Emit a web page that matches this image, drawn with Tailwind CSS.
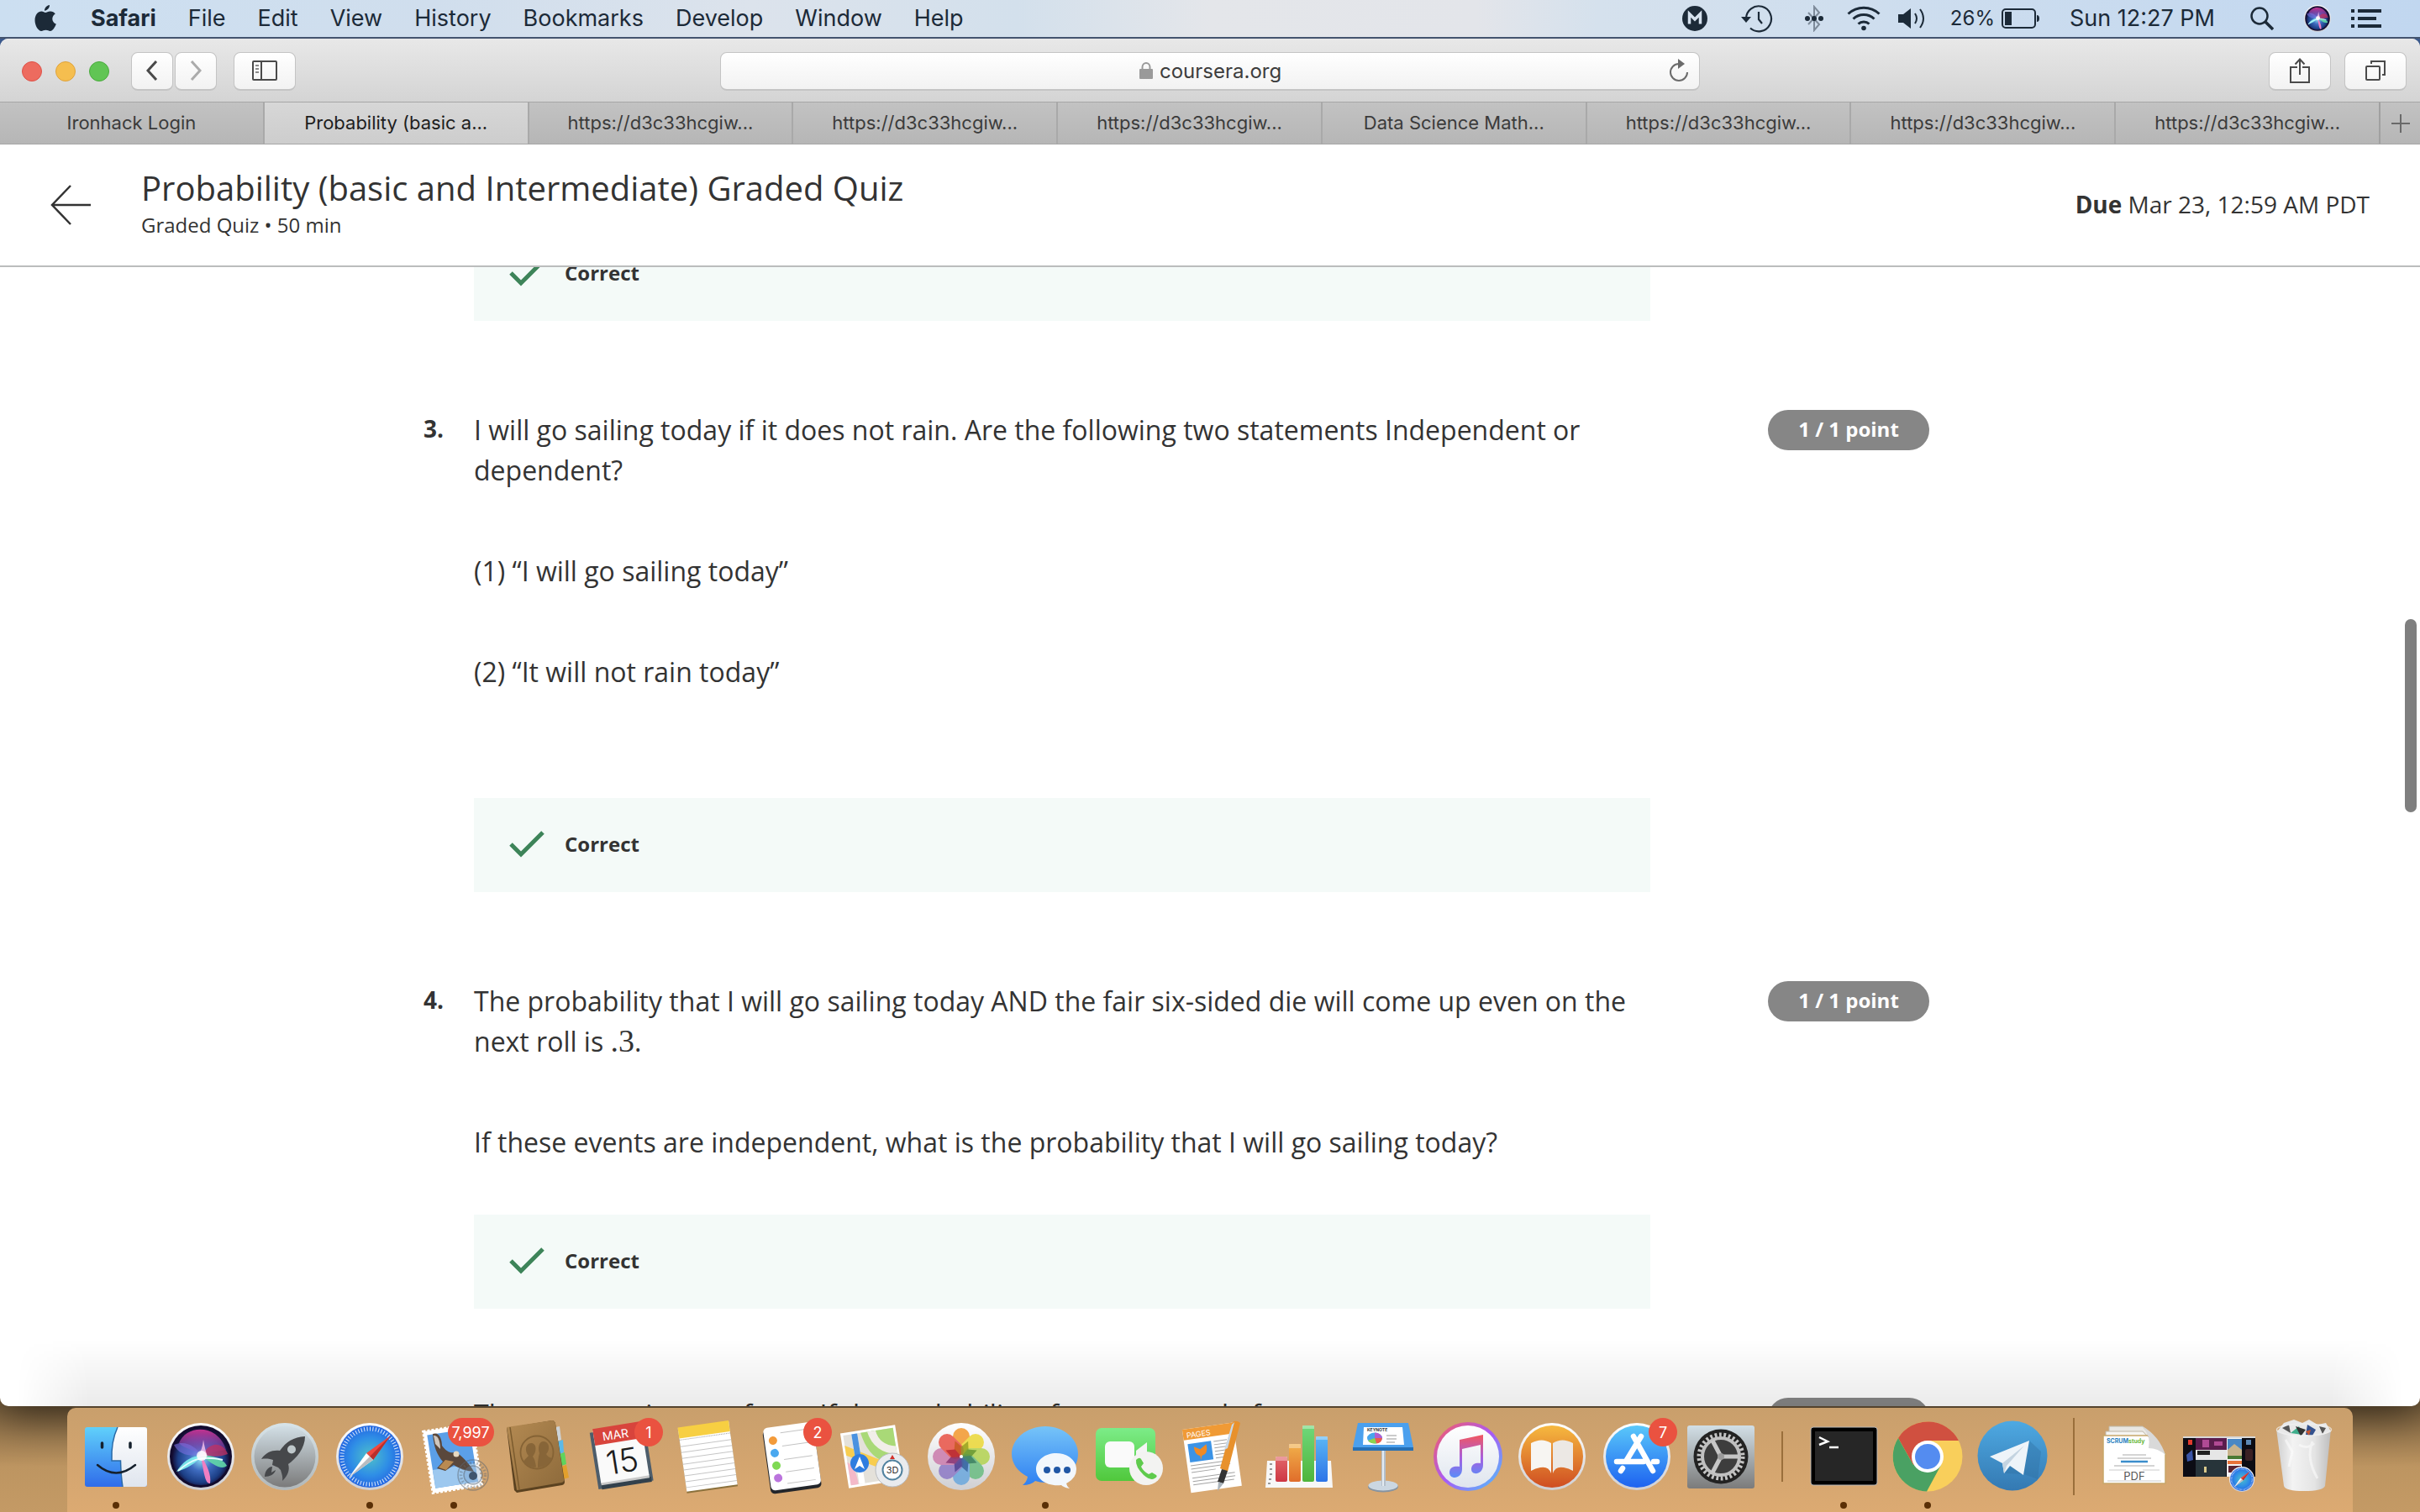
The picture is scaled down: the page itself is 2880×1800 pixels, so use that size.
<!DOCTYPE html>
<html lang="en">
<head>
<meta charset="utf-8">
<title>Probability (basic and Intermediate) Graded Quiz</title>
<script src="https://cdn.jsdelivr.net/npm/@tailwindcss/browser@4"></script>
</head>
<body class="flex h-screen flex-col overflow-hidden bg-[linear-gradient(to_bottom,#44669f_5%,#a98355_50%,#7d6340_93%,#bd9561_97%,#c49a65)] font-['Inter','Liberation_Sans',sans-serif]">

<!-- Shared gradients and symbols -->
<svg class="absolute size-0" aria-hidden="true">
  <defs>
    <linearGradient id="blue" x2="0" y2="1"><stop stop-color="#5ac8fa"/><stop offset="1" stop-color="#1d62f0"/></linearGradient>
    <linearGradient id="finder" x2="0" y2="1"><stop stop-color="#60d0fb"/><stop offset="1" stop-color="#2f6cea"/></linearGradient>
    <linearGradient id="white" x2="0" y2="1"><stop stop-color="#fff"/><stop offset="1" stop-color="#dfe5ee"/></linearGradient>
    <linearGradient id="rim" x2="0" y2="1"><stop stop-color="#fff"/><stop offset="1" stop-color="#cfcfd3"/></linearGradient>
    <linearGradient id="silver" x2="0" y2="1"><stop stop-color="#d2dfe6"/><stop offset="1" stop-color="#7b7b7b"/></linearGradient>
    <linearGradient id="orange" x2="0" y2="1"><stop stop-color="#f6b93f"/><stop offset="1" stop-color="#cf4d22"/></linearGradient>
    <linearGradient id="green" x2="0" y2="1"><stop stop-color="#7cec88"/><stop offset="1" stop-color="#50c83c"/></linearGradient>
    <linearGradient id="msg" x2="0" y2="1"><stop stop-color="#76c4f8"/><stop offset="1" stop-color="#2f80f2"/></linearGradient>
    <linearGradient id="tg" x2="0" y2="1"><stop stop-color="#4ea9e2"/><stop offset="1" stop-color="#3479b2"/></linearGradient>
    <linearGradient id="tunes" x2="1" y2="1"><stop stop-color="#fb5c5c"/><stop offset=".5" stop-color="#a95af5"/><stop offset="1" stop-color="#4ac7fb"/></linearGradient>
    <linearGradient id="note" x2="0" y2="1"><stop stop-color="#f2565e"/><stop offset=".55" stop-color="#a65fe0"/><stop offset="1" stop-color="#5a8df8"/></linearGradient>
    <linearGradient id="leather" x2="1" y2="1"><stop stop-color="#b48a52"/><stop offset="1" stop-color="#8d6a3b"/></linearGradient>
    <linearGradient id="bin" x2="1"><stop stop-color="#cfcfcf"/><stop offset=".3" stop-color="#f3f3f3"/><stop offset=".7" stop-color="#e4e4e4"/><stop offset="1" stop-color="#bdbdbd"/></linearGradient>
    <linearGradient id="bred" x2="0" y2="1"><stop stop-color="#e2666a"/><stop offset="1" stop-color="#cd3743"/></linearGradient>
    <linearGradient id="borange" x2="0" y2="1"><stop stop-color="#f1b04a"/><stop offset="1" stop-color="#e06d2b"/></linearGradient>
    <linearGradient id="bgreen" x2="0" y2="1"><stop stop-color="#6fd87b"/><stop offset="1" stop-color="#4fb53b"/></linearGradient>
    <linearGradient id="bblue" x2="0" y2="1"><stop stop-color="#5bb7f5"/><stop offset="1" stop-color="#2c74e8"/></linearGradient>
    <radialGradient id="sea"><stop stop-color="#4fc0c8"/><stop offset=".6" stop-color="#2f8fe6"/><stop offset="1" stop-color="#2467e2"/></radialGradient>
    <radialGradient id="siriBg" cy=".55"><stop stop-color="#8fe0f4"/><stop offset=".4" stop-color="#3f6cc0"/><stop offset=".8" stop-color="#1c3f86"/><stop offset="1" stop-color="#140f38"/></radialGradient>
    <linearGradient id="siriTop" x2="0" y2="1"><stop stop-color="#c23391"/><stop offset="1" stop-color="#7c4fc0" stop-opacity=".35"/></linearGradient>
    <symbol id="siri" viewBox="0 0 80 80">
      <circle cx="40" cy="40" r="40" fill="url(#rim)"/>
      <circle cx="40" cy="40" r="37" fill="#120b2e"/>
      <circle cx="40" cy="40" r="34" fill="url(#siriBg)"/>
      <path d="M14 24C22 2 60 0 70 32C60 34 50 34 42 38C34 32 22 32 14 24Z" fill="url(#siriTop)"/>
      <path d="M42 38C50 22 66 22 72 37C62 41 50 40 42 38Z" fill="#c42f5f" opacity=".75"/>
      <path d="M8 26C22 20 34 28 40 38C26 40 14 38 8 26Z" fill="#7a6fe0" opacity=".6"/>
      <path d="M40 40C30 38 18 46 11 58C24 54 34 48 40 40Z" fill="#7ff0ee" opacity=".9"/>
      <path d="M40 38C54 38 68 44 71 51C64 57 52 48 40 38Z" fill="#63d8a8" opacity=".9"/>
      <path d="M40 38C47 50 53 62 51 72C45 73 43 56 40 38Z" fill="#f07fc2"/>
      <path d="M36 40Q42 32 43 20Q45 32 48 40Z" fill="#fbc6ee" opacity=".8"/>
      <path d="M13 57C28 44 40 38 66 44" fill="none" stroke="#e2ffff" stroke-width="2"/>
      <circle cx="41" cy="39" r="6" fill="#fff" opacity=".85"/>
    </symbol>
    <symbol id="compass" viewBox="0 0 80 80">
      <circle cx="40" cy="40" r="40" fill="url(#rim)"/>
      <circle cx="40" cy="40" r="37" fill="url(#sea)"/>
      <circle cx="40" cy="40" r="33" fill="none" stroke="#fff" stroke-opacity=".85" stroke-width="5" stroke-dasharray="1 2.45"/>
      <path d="M65 15L36 36L44 44Z" fill="#f0483e"/><path d="M65 15L40 40L44 44Z" fill="#b92f2b"/>
      <path d="M15 65L36 36L44 44Z" fill="#fff"/><path d="M15 65L40 40L44 44Z" fill="#b9bcc0"/>
    </symbol>
    <symbol id="check" viewBox="0 0 42 32"><path d="M2 16L14 28L40 2" fill="none" stroke="#3d8459" stroke-width="5"/></symbol>
  </defs>
</svg>

<!-- System menu bar -->
<header class="relative z-10 flex h-[46px] shrink-0 items-center border-b-2 border-[#44546f] bg-[linear-gradient(to_right,#ccdff1,#d0deed_18%,#dce3ec_31%,#d3e0ec_42%,#e4e6ea_50%,#e3e5ea_61%,#d5e1ed_66%,#c1d7f0)] pr-[46px] pl-[40px] text-[27px] leading-[32px] text-[#1c2a38]">
  <nav class="flex items-center gap-[38px]">
    <a href="#" aria-label="Apple menu" class="mr-[2px]"><svg class="h-[32px] w-[28px]" viewBox="0 0 28 32" fill="#1c2a38"><path d="M19 0c.3 3-2.800 6.800-6 6.700C12.700 3.800 15.800.3 19 0zM14 9c1.500 0 3.200-1.700 6-1.600 2.400.1 4.500 1.100 5.800 3-5.200 3.200-4.300 10 1 12.200C25.500 26.500 22.700 31 19.800 31c-2 0-2.800-1.200-5.300-1.200S11 31 9.200 31C5.500 31 1.500 24.500 1.500 18.300 1.500 11.500 5.500 7.600 9.300 7.600 11.500 7.600 13 9 14 9z"/></svg></a>
    <a href="#" class="font-bold">Safari</a>
    <a href="#">File</a>
    <a href="#">Edit</a>
    <a href="#">View</a>
    <a href="#">History</a>
    <a href="#">Bookmarks</a>
    <a href="#">Develop</a>
    <a href="#">Window</a>
    <a href="#">Help</a>
  </nav>
  <div class="ml-auto flex items-center">
    <svg class="mr-[40px] size-[30px]" viewBox="0 0 30 30"><circle cx="15" cy="15" r="15" fill="#1c2a38"/><path d="M8.500 21.500V9.500L15 16L21.500 9.500V21.500" fill="none" stroke="#d6e2ef" stroke-width="3.500"/></svg>
    <svg class="mr-[38px] h-[34px] w-[38px]" viewBox="0 0 38 34" fill="none" stroke="#1c2a38" stroke-width="2.200"><path d="M6 17A15 15 0 1 1 11 28.500"/><path d="M21 9V18L25 23"/><path d="M0 15H12L6 22Z" fill="#1c2a38" stroke="none"/></svg>
    <svg class="mr-[28px] h-[32px] w-[22px]" viewBox="0 0 22 32" fill="none"><path d="M4 9L17 23L11 30V2L17 9L4 23" stroke="#7e8b9a" stroke-width="2"/><g fill="#1c2a38"><circle cx="3" cy="16" r="3"/><circle cx="11" cy="16" r="3"/><circle cx="19" cy="16" r="3"/></g></svg>
    <svg class="mr-[21px] h-[30px] w-[40px]" viewBox="0 0 40 30" fill="none" stroke="#1c2a38" stroke-width="3"><path d="M1.500 9.500A27 27 0 0 1 38.500 9.500"/><path d="M7.500 15.500A18 18 0 0 1 32.500 15.500"/><path d="M13.500 21.500A9.500 9.500 0 0 1 26.500 21.500"/><circle cx="20" cy="26.500" r="2.800" fill="#1c2a38" stroke="none"/></svg>
    <svg class="mr-[28px] h-[26px] w-[34px]" viewBox="0 0 34 26" fill="none" stroke="#1c2a38" stroke-width="2"><path d="M0 8H6L15 1V25L6 18H0Z" fill="#1c2a38" stroke="none"/><path d="M20 7Q24 13 20 19"/><path d="M26 2Q34 13 26 24"/></svg>
    <span class="mr-[8px] text-[24px]">26%</span>
    <svg class="mr-[35px] h-[24px] w-[46px]" viewBox="0 0 46 24"><rect x="1" y="1" width="39" height="22" rx="4" fill="none" stroke="#1c2a38" stroke-width="2"/><rect x="4" y="4" width="8" height="16" fill="#1c2a38"/><path d="M42 8Q45 8 45 12T42 16Z" fill="#1c2a38"/></svg>
    <span class="mr-[42px]">Sun 12:27 PM</span>
    <svg class="mr-[36px] size-[28px]" viewBox="0 0 28 28" fill="none" stroke="#1c2a38"><circle cx="11" cy="11" r="9.500" stroke-width="2.500"/><path d="M18 18L27 27" stroke-width="3.500"/></svg>
    <svg class="mr-[24px] size-[32px]"><use href="#siri"/></svg>
    <svg class="h-[22px] w-[36px]" viewBox="0 0 36 22" fill="#1c2a38"><path d="M0 0h4v4H0zM8 0h28v4H8zM0 9h4v4H0zM8 9h22v4H8zM0 18h4v4H0zM8 18h28v4H8z"/></svg>
  </div>
</header>

<!-- Browser window -->
<div class="relative flex min-h-0 flex-1 flex-col overflow-hidden rounded-[10px] bg-white shadow-[0_10px_50px_rgba(0,0,0,0.6)]">

  <!-- Toolbar -->
  <div class="flex h-[75px] shrink-0 items-center bg-linear-to-b from-[#e8e8e8] to-[#d4d4d4] px-[16px] pt-[2px]">
    <div class="flex w-[841px] items-center pl-[10px]">
      <div class="flex gap-4">
        <button aria-label="Close" class="size-6 rounded-full border border-[#df5148] bg-[#ed6b5f]"></button>
        <button aria-label="Minimise" class="size-6 rounded-full border border-[#dfa33c] bg-[#f5be4f]"></button>
        <button aria-label="Zoom" class="size-6 rounded-full border border-[#4aab3d] bg-[#61c554]"></button>
      </div>
      <div class="ml-[26px] flex gap-[2px]">
        <button aria-label="Back" class="flex h-[46px] w-[50px] items-center justify-center rounded-lg border border-b-2 border-[#c4c4c4] bg-linear-to-b from-white to-[#f2f2f2]"><svg class="h-[24px] w-[14px]" viewBox="0 0 14 24" fill="none" stroke="#4a4a4a" stroke-width="3"><path d="M12 1L2 12L12 23"/></svg></button>
        <button aria-label="Forward" class="flex h-[46px] w-[50px] items-center justify-center rounded-lg border border-b-2 border-[#c4c4c4] bg-linear-to-b from-white to-[#f2f2f2]"><svg class="h-[24px] w-[14px]" viewBox="0 0 14 24" fill="none" stroke="#ababab" stroke-width="3"><path d="M2 1L12 12L2 23"/></svg></button>
      </div>
      <button aria-label="Show sidebar" class="ml-[20px] flex h-[46px] w-[74px] items-center justify-center rounded-lg border border-b-2 border-[#c4c4c4] bg-linear-to-b from-white to-[#f2f2f2]"><svg class="h-[24px] w-[30px]" viewBox="0 0 30 24" fill="none" stroke="#4a4a4a" stroke-width="2"><rect x="1" y="1" width="28" height="22" rx="1"/><path d="M11 1V23"/><path d="M4 6h4M4 10h4M4 14h4" stroke="#8a8a8a"/></svg></button>
    </div>
    <div class="flex h-[46px] flex-1 items-center justify-center rounded-lg border border-b-2 border-[#c4c4c4] bg-linear-to-b from-white to-[#f2f2f2] pr-[12px] pl-[42px]">
      <div class="mx-auto flex items-center gap-[8px] pt-[2px]">
        <svg class="mb-[2px] h-[20px] w-[16px]" viewBox="0 0 16 20"><path d="M3.500 9V6A4.500 5 0 0 1 12.500 6V9" fill="none" stroke="#9a9a9a" stroke-width="2"/><rect y="8" width="16" height="12" rx="1" fill="#9a9a9a"/></svg>
        <input aria-label="Address" value="coursera.org" class="w-[150px] bg-transparent text-[24px] leading-[32px] text-[#3d3d3d] outline-none">
      </div>
      <button aria-label="Reload"><svg class="h-[28px] w-[24px]" viewBox="0 0 24 28" fill="none" stroke="#6b6b6b" stroke-width="2"><path d="M12 6A10 10 0 1 0 22 16"/><path d="M11 0V12L19 6Z" fill="#6b6b6b" stroke="none"/></svg></button>
    </div>
    <div class="flex w-[841px] justify-end gap-4">
      <button aria-label="Share" class="flex h-[46px] w-[74px] items-center justify-center rounded-lg border border-b-2 border-[#c4c4c4] bg-linear-to-b from-white to-[#f2f2f2]"><svg class="h-[30px] w-[24px]" viewBox="0 0 24 30" fill="none" stroke="#4a4a4a" stroke-width="2"><path d="M9 11H1V29H23V11H15"/><path d="M12 20V1M6.500 7.500L12 1.500L17.500 7.500"/></svg></button>
      <button aria-label="Show tabs" class="flex h-[46px] w-[74px] items-center justify-center rounded-lg border border-b-2 border-[#c4c4c4] bg-linear-to-b from-white to-[#f2f2f2]"><svg class="h-[24px] w-[24px]" viewBox="0 0 24 24" fill="none" stroke="#4a4a4a" stroke-width="2"><rect x="1" y="7" width="16" height="16" rx="1"/><path d="M7 4V1H23V17H20"/></svg></button>
    </div>
  </div>

  <!-- Tabs -->
  <nav class="flex h-[51px] shrink-0 border-y border-y-[#a6a6a6] bg-linear-to-b from-[#c2c2c2] to-[#b6b6b6] text-[22px] leading-[48px] text-[#3b3b3b]">
    <a href="#" class="flex-1 text-center">Ironhack Login</a>
    <a href="#" class="flex-1 border-l-2 border-[#a9a9a9] bg-linear-to-b from-[#d7d7d7] to-[#cdcdcd] text-center text-[#1e1e1e]">Probability (basic a...</a>
    <a href="#" class="flex-1 border-l-2 border-[#a9a9a9] text-center">https://d3c33hcgiw...</a>
    <a href="#" class="flex-1 border-l-2 border-[#a9a9a9] text-center">https://d3c33hcgiw...</a>
    <a href="#" class="flex-1 border-l-2 border-[#a9a9a9] text-center">https://d3c33hcgiw...</a>
    <a href="#" class="flex-1 border-l-2 border-[#a9a9a9] text-center">Data Science Math...</a>
    <a href="#" class="flex-1 border-l-2 border-[#a9a9a9] text-center">https://d3c33hcgiw...</a>
    <a href="#" class="flex-1 border-l-2 border-[#a9a9a9] text-center">https://d3c33hcgiw...</a>
    <a href="#" class="flex-1 border-l-2 border-[#a9a9a9] text-center">https://d3c33hcgiw...</a>
    <button aria-label="New tab" class="flex w-[49px] items-center justify-center border-l-2 border-[#a0a0a0]"><svg class="size-[22px]" viewBox="0 0 22 22" stroke="#6a6a6a" stroke-width="2"><path d="M11 0V22M0 11H22"/></svg></button>
  </nav>

  <!-- Page -->
  <div class="flex min-h-0 flex-1 flex-col font-['Open_Sans',sans-serif] text-[#333]">
    <header class="flex h-[146px] shrink-0 items-center border-b-2 border-[#bbbdbd] px-[60px]">
      <a href="#" aria-label="Back" class="w-[108px]"><svg class="h-[48px] w-[48px]" viewBox="0 0 48 48" fill="none" stroke="#333" stroke-width="2.500"><path d="M24 1L2 24L24 47M2 24H48"/></svg></a>
      <div class="pb-1">
        <h1 class="text-[40px] leading-[52px]">Probability (basic and Intermediate) Graded Quiz</h1>
        <p class="text-[24px] leading-[36px]">Graded Quiz • 50 min</p>
      </div>
      <p class="ml-auto pb-[2px] text-[28px] leading-[36px]"><b>Due</b> Mar 23, 12:59 AM PDT</p>
    </header>

    <main class="min-h-0 flex-1 overflow-hidden">
      <div class="mx-auto -mt-12 flex max-w-[1872px] flex-col gap-[106px] text-[32px] leading-[48px]">
        <section class="flex">
          <div class="ml-[60px] flex h-[112px] w-[1400px] items-center gap-[24px] bg-[#f4faf8] pb-[2px] pl-[42px] text-[24px] font-bold"><svg class="h-[32px] w-[42px]"><use href="#check"/></svg>Correct</div>
        </section>

        <section class="flex items-start">
          <span class="w-[60px] shrink-0 text-[28px] leading-[44px] font-bold">3.</span>
          <div class="w-[1400px]">
            <div class="flex flex-col gap-[72px]">
              <p>I will go sailing today if it does not rain. Are the following two statements Independent or dependent?</p>
              <p>(1) “I will go sailing today”</p>
              <p>(2) “It will not rain today”</p>
            </div>
            <div class="mt-[126px] flex h-[112px] items-center gap-[24px] bg-[#f4faf8] pb-[2px] pl-[42px] text-[24px] font-bold"><svg class="h-[32px] w-[42px]"><use href="#check"/></svg>Correct</div>
          </div>
          <span class="ml-[140px] h-[48px] w-[192px] rounded-full bg-[#868686] text-center text-[24px] leading-[46px] font-bold text-white">1 / 1 point</span>
        </section>

        <section class="flex items-start">
          <span class="w-[60px] shrink-0 text-[28px] leading-[44px] font-bold">4.</span>
          <div class="w-[1400px]">
            <div class="flex flex-col gap-[72px]">
              <p>The probability that I will go sailing today AND the fair six-sided die will come up even on the next roll is <span class="font-['Liberation_Serif',serif] text-[38px] leading-[40px]">.3</span>.</p>
              <p>If these events are independent, what is the probability that I will go sailing today?</p>
            </div>
            <div class="mt-[62px] flex h-[112px] items-center gap-[24px] bg-[#f4faf8] pb-[2px] pl-[42px] text-[24px] font-bold"><svg class="h-[32px] w-[42px]"><use href="#check"/></svg>Correct</div>
          </div>
          <span class="ml-[140px] h-[48px] w-[192px] rounded-full bg-[#868686] text-center text-[24px] leading-[46px] font-bold text-white">1 / 1 point</span>
        </section>

        <section class="flex items-start">
          <span class="w-[60px] shrink-0 text-[28px] font-bold">5.</span>
          <p class="w-[1400px] leading-[40px]">The outcome is one of two. If the probability of an event and of</p>
          <span class="ml-[140px] h-[48px] w-[192px] rounded-full bg-[#868686] text-center text-[24px] leading-[46px] font-bold text-white">1 / 1 point</span>
        </section>
      </div>
    </main>
  </div>

  <!-- Scroll thumb and the dock's shadow over the page -->
  <div class="absolute top-[691px] right-[4px] h-[230px] w-[14px] rounded-full bg-[#7f7f7f]"></div>
  <div class="pointer-events-none absolute inset-x-[20px] bottom-0 h-[80px] bg-linear-to-b from-black/0 to-black/8 mask-x-from-97%"></div>
</div>

<!-- Dock -->
<footer class="relative mx-20 mt-[2px] flex h-[124px] shrink-0 rounded-t-[10px] bg-linear-to-b from-[#c99f6c] to-[#dcaa72] px-2 shadow-[0_-2px_0_#54432d]">
  <a href="#" aria-label="Finder" class="flex flex-1 justify-center"><svg class="h-[124px] w-[100px]" viewBox="0 0 100 124">
    <rect x="13" y="23" width="74" height="71" rx="3" fill="url(#finder)"/>
    <path d="M52 23H84Q87 23 87 26V91Q87 94 84 94H58Q56 82 55.500 63H45Q44 40 52 23Z" fill="url(#white)"/>
    <path d="M52 23Q44 40 45 63H55.500Q56 82 58 94" fill="none" stroke="#2a6aa6" stroke-width="1.500"/>
    <path d="M33.500 42V47M67 42V47" stroke="#15202c" stroke-width="3.500" stroke-linecap="round"/><path d="M28 68Q50 87 73 68" fill="none" stroke="#15202c" stroke-width="2.500" stroke-linecap="round"/>
    <circle cx="50" cy="116" r="4" fill="#5a2f06"/></svg></a>
  <a href="#" aria-label="Siri" class="flex flex-1 justify-center"><svg class="h-[124px] w-[100px]" viewBox="0 0 100 124"><use href="#siri" x="10" y="18" width="80" height="80"/></svg></a>
  <a href="#" aria-label="Launchpad" class="flex flex-1 justify-center"><svg class="h-[124px] w-[100px]" viewBox="0 0 100 124">
    <circle cx="50" cy="58" r="40" fill="#dce8ec"/><circle cx="50" cy="58" r="40" fill="url(#silver)" opacity=".45"/><circle cx="50" cy="58" r="36.500" fill="url(#silver)"/>
    <path d="M74 34C60 35 52 40 44 51C36 50 28 52 22 61C28 60 33 61 36 62L35 68L42 71L45 74C46 78 48 82 47 87C54 80 56 74 54 67C64 60 74 48 74 34Z" fill="#46484b"/><circle cx="58" cy="49.500" r="5" fill="#bfc8cb"/><path d="M35 70C30 70 26 76 26 82C32 82 38 79 39 74L34 77Z" fill="#46484b"/></svg></a>
  <a href="#" aria-label="Safari" class="flex flex-1 justify-center"><svg class="h-[124px] w-[100px]" viewBox="0 0 100 124"><use href="#compass" x="10" y="18" width="80" height="80"/><circle cx="50" cy="116" r="4" fill="#5a2f06"/></svg></a>
  <a href="#" aria-label="Mail" class="flex flex-1 justify-center"><svg class="h-[124px] w-[100px]" viewBox="0 0 100 124">
    <g transform="rotate(-9 50 60)"><rect x="19" y="23" width="59" height="74" fill="#fff" stroke="#fff" stroke-width="3" stroke-dasharray="3 2"/><rect x="23" y="28" width="51" height="64" fill="#5b9fe8"/><path d="M23 70H74V92H23Z" fill="#9dc8ef"/></g>
    <path d="M25 31C33 28 36 38 36 45C41 52 46 54 50 53L56 55C62 60 70 68 74 76C64 75 56 72 50 68L40 75L30 72L37 64C30 56 26 46 25 31Z" fill="#5a483c"/><path d="M26 33C32 32 34 42 34 49L28 43Z" fill="#cfc6bd"/><path d="M40 62L50 64L41 74L32 71Z" fill="#b98a52"/><circle cx="53" cy="55" r="3.500" fill="#e8d9c0"/>
    <circle cx="73" cy="80" r="18" fill="none" stroke="#5c6670" stroke-opacity=".5" stroke-width="1.500"/><circle cx="73" cy="80" r="11" fill="#6d94c0" fill-opacity=".3" stroke="#5c6670" stroke-opacity=".5" stroke-width="1.500"/><circle cx="73" cy="80" r="14.500" fill="none" stroke="#5c6670" stroke-opacity=".4" stroke-width="3.500" stroke-dasharray="2 2"/><circle cx="73" cy="81" r="5" fill="#40556e"/>
    <rect x="43" y="12" width="55" height="34" rx="17" fill="#ea5240"/><text x="70" y="35.500" text-anchor="middle" font-size="18" fill="#fff">7,997</text>
    <circle cx="50" cy="116" r="4" fill="#5a2f06"/></svg></a>
  <a href="#" aria-label="Contacts" class="flex flex-1 justify-center"><svg class="h-[124px] w-[100px]" viewBox="0 0 100 124">
    <path d="M70 23L75 22L77 38L72 40Z" fill="#cdd3d6"/><path d="M73 40L79 38L80 53L75 55Z" fill="#5bb9e8"/><path d="M75 55L81 53L83 67L77 69Z" fill="#5fd45c"/><path d="M77 70L83 68L86 83L79 85Z" fill="#e3a02c"/>
    <path d="M12 24L66 15Q69 15 70 19L81 88Q81 91 78 92L24 101L21 98Z" fill="#5b4220"/><path d="M12 23L66 15Q69 15 70 19L80 85Q81 88 77 89L24 98Z" fill="url(#leather)"/><path d="M16 23L27 97" stroke="#7b5b2e" stroke-width="1.500"/>
    <circle cx="48" cy="53" r="19.500" fill="none" stroke="#856335" stroke-width="1.800"/><path d="M41 42C34 42 33 52 38 57C36 60 32 62 32 65C36 71 46 72 47 70C46 64 45 60 43 58C48 52 48 42 41 42Z M56 40C50 40 49 48 51 54C50 58 49 62 49 71C58 71 64 66 66 60C62 59 60 57 59 55C64 50 63 40 56 40Z" fill="#876538"/></svg></a>
  <a href="#" aria-label="Calendar" class="flex flex-1 justify-center"><svg class="h-[124px] w-[100px]" viewBox="0 0 100 124">
    <g transform="rotate(-9 50 60)"><rect x="16" y="24" width="66" height="68" fill="#4d5d6b"/><rect x="20" y="87" width="60" height="6" fill="#33414c"/><rect x="20" y="84" width="58" height="4" fill="#c9c9c9"/><rect x="20" y="22" width="58" height="63" fill="#fafafa"/><rect x="20" y="20" width="58" height="20" fill="#d8443c"/><text x="46" y="36" text-anchor="middle" font-size="14" fill="#fff">MAR</text><text x="49" y="77" text-anchor="middle" font-size="39" font-weight="300" fill="#1d1d1d">15</text></g>
    <circle cx="81" cy="29" r="17" fill="#ea5240"/><text x="81" y="35.500" text-anchor="middle" font-size="18" fill="#fff">1</text></svg></a>
  <a href="#" aria-label="Notes" class="flex flex-1 justify-center"><svg class="h-[124px] w-[100px]" viewBox="0 0 100 124">
    <g transform="rotate(-8 50 60)"><rect x="20" y="22" width="61" height="76" fill="#8b713c"/><rect x="20" y="20" width="61" height="76" fill="#fff"/><rect x="20" y="19" width="61" height="13" fill="#f7cf42"/><path d="M20 34H81" stroke="#999" stroke-dasharray="1 1"/><path d="M20 42H81M20 49H81M20 56H81M20 63H81M20 70H81M20 77H81M20 84H81M20 91H81" stroke="#c6c6c6"/></g></svg></a>
  <a href="#" aria-label="Reminders" class="flex flex-1 justify-center"><svg class="h-[124px] w-[100px]" viewBox="0 0 100 124">
    <g transform="rotate(-8 50 60)"><rect x="19" y="23" width="61" height="76" rx="5" fill="#23262b"/><rect x="20" y="20" width="60" height="75" rx="5" fill="#fff"/><path d="M40 28H74M40 44H74M40 60H74M40 75H74M40 89H74" stroke="#c4c4c4"/><circle cx="30" cy="36" r="5" fill="#f39b3a"/><circle cx="30" cy="51" r="5" fill="#4aa8ef"/><circle cx="30" cy="66" r="5" fill="#7fd953"/><circle cx="30" cy="81" r="5" fill="#bb74dd"/></g>
    <circle cx="80" cy="29" r="17" fill="#ea5240"/><text x="80" y="35.500" text-anchor="middle" font-size="18" fill="#fff">2</text></svg></a>
  <a href="#" aria-label="Maps" class="flex flex-1 justify-center"><svg class="h-[124px] w-[100px]" viewBox="0 0 100 124">
    <g transform="rotate(-9 45 60)"><rect x="12" y="25" width="66" height="66" fill="#fff"/><rect x="15" y="28" width="60" height="60" fill="#e4e1da"/><path d="M36 28H75V72L58 66Q40 56 36 28Z" fill="#a9d977"/><path d="M44 28H54Q56 46 75 50V60Q48 54 44 28Z" fill="#f1eee8"/><path d="M15 60Q24 66 24 88H15Z" fill="#f4b9c8"/><path d="M15 40L75 76V86L15 52Z" fill="#f8cd4f"/><path d="M25 28H32V88H25Z" fill="#fff"/><path d="M25 28H32V60H25Z" fill="#4a92e0"/></g>
    <circle cx="30" cy="66" r="11" fill="#2f7de0"/><path d="M30 58L36 73L30 69L24 73Z" fill="#fff"/>
    <circle cx="69" cy="74" r="20" fill="#e9ebee" stroke="#b9bcc0"/><circle cx="69" cy="74" r="11.500" fill="#fff" stroke="#51829f" stroke-width="2"/><path d="M69 56L72 61H66Z" fill="#d3302a"/><text x="69" y="78" text-anchor="middle" font-size="11" fill="#333">3D</text></svg></a>
  <a href="#" aria-label="Photos" class="flex flex-1 justify-center"><svg class="h-[124px] w-[100px]" viewBox="0 0 100 124">
    <circle cx="50" cy="58" r="40" fill="url(#rim)"/>
    <g opacity=".88"><rect x="40" y="24" width="20" height="34" rx="10" fill="#f39b33"/><rect x="40" y="24" width="20" height="34" rx="10" fill="#ecd93c" transform="rotate(45 50 58)"/><rect x="40" y="24" width="20" height="34" rx="10" fill="#b5d455" transform="rotate(90 50 58)"/><rect x="40" y="24" width="20" height="34" rx="10" fill="#6dbd84" transform="rotate(135 50 58)"/><rect x="40" y="24" width="20" height="34" rx="10" fill="#6ea9dd" transform="rotate(180 50 58)"/><rect x="40" y="24" width="20" height="34" rx="10" fill="#8f7cc6" transform="rotate(225 50 58)"/><rect x="40" y="24" width="20" height="34" rx="10" fill="#cc7fae" transform="rotate(270 50 58)"/><rect x="40" y="24" width="20" height="34" rx="10" fill="#e9574b" transform="rotate(315 50 58)"/></g>
    <g opacity=".75"><path d="M50 58L45 48L50 38L55 48Z" fill="#c35a1c" transform="rotate(-22 50 58)"/><path d="M50 58L45 48L50 38L55 48Z" fill="#8c9a1e" transform="rotate(24 50 58)"/><path d="M50 58L45 48L50 38L55 48Z" fill="#5d8f2c" transform="rotate(68 50 58)"/><path d="M50 58L45 48L50 38L55 48Z" fill="#35775c" transform="rotate(112 50 58)"/><path d="M50 58L45 48L50 38L55 48Z" fill="#2e5a95" transform="rotate(158 50 58)"/><path d="M50 58L45 48L50 38L55 48Z" fill="#463a8c" transform="rotate(202 50 58)"/><path d="M50 58L45 48L50 38L55 48Z" fill="#7e2c6c" transform="rotate(248 50 58)"/><path d="M50 58L45 48L50 38L55 48Z" fill="#b3202a" transform="rotate(292 50 58)"/></g><circle cx="50" cy="58" r="2" fill="#fff"/></svg></a>
  <a href="#" aria-label="Messages" class="flex flex-1 justify-center"><svg class="h-[124px] w-[100px]" viewBox="0 0 100 124">
    <path d="M50 22C72 22 89 37 89 55S72 89 50 89Q44 89 38 87Q33 92 23 92Q28 88 29 82C17 76 10 66 10 55C10 37 28 22 50 22Z" fill="url(#msg)"/>
    <path d="M63 54C76 54 87 62 87 73Q87 84 75 90Q76 94 79 96Q72 95 69 92C51 94 39 84 39 73S50 54 63 54Z" fill="#f2f7fc"/><g fill="#2057a5"><circle cx="52" cy="74" r="4"/><circle cx="64" cy="74" r="4"/><circle cx="76" cy="74" r="4"/></g><circle cx="50" cy="116" r="4" fill="#5a2f06"/></svg></a>
  <a href="#" aria-label="FaceTime" class="flex flex-1 justify-center"><svg class="h-[124px] w-[100px]" viewBox="0 0 100 124">
    <rect x="9" y="24" width="71" height="63" rx="7" fill="url(#green)"/><rect x="20" y="40" width="35" height="31" rx="6" fill="#fafafa"/><path d="M57 51L70 41V70H57Z" fill="#f4f4f4"/>
    <circle cx="69" cy="72" r="20" fill="#f3f3f1"/><path d="M57 62Q61 58 63 61L66 66L63 70Q66 76 72 79L76 77L81 80Q83 82 79 84Q74 87 66 80Q56 70 57 62Z" fill="#5fcb4c"/></svg></a>
  <a href="#" aria-label="Pages" class="flex flex-1 justify-center"><svg class="h-[124px] w-[100px]" viewBox="0 0 100 124">
    <g transform="rotate(-8 50 60)"><rect x="17" y="21" width="61" height="76" fill="#fff"/><rect x="17" y="21" width="61" height="13" fill="#f09a35"/><text x="21" y="32" font-size="9" fill="#fff">PAGES</text><rect x="21" y="39" width="28" height="22" fill="#3b93e6"/><path d="M28 43L35 47L43 42Q44 54 36 55L34 60V55Q27 52 28 43Z" fill="#f08a25"/><path d="M52 40H68M52 44H68M52 48H68M52 52H68M52 56H68M52 60H68M21 65H68M21 69H68M21 73H50M21 80H72M21 84H72M21 88H70" stroke="#a3a3a3" stroke-width="1"/></g>
    <path d="M72 17Q76 14 81 18L66 76L57 72Z" fill="#e8912c"/><path d="M71 20L74 17L66 48L62 50Z" fill="#c9d8e6"/><path d="M59 73L66 75L61 90L54 88Z" fill="#333"/><path d="M55 88L61 90L54 99Z" fill="#a9b3bb"/></svg></a>
  <a href="#" aria-label="Numbers" class="flex flex-1 justify-center"><svg class="h-[124px] w-[100px]" viewBox="0 0 100 124">
    <path d="M12 63H88L90 95H10Z" fill="#f7f7f7"/><path d="M15 67h3M15 73h3M15 79h3M14 85h3M13 90h3" stroke="#999" stroke-width="2"/><rect x="22" y="58" width="14" height="30" rx="2" fill="url(#bred)"/><rect x="38" y="43" width="14" height="45" rx="2" fill="url(#borange)"/><rect x="54" y="21" width="14" height="67" rx="2" fill="url(#bgreen)"/><rect x="70" y="34" width="14" height="54" rx="2" fill="url(#bblue)"/><path d="M22 58h14v5H22zM38 43h14v5H38zM54 21h14v4H54zM70 34h14v4H70z" fill="#fff" opacity=".35"/></svg></a>
  <a href="#" aria-label="Keynote" class="flex flex-1 justify-center"><svg class="h-[124px] w-[100px]" viewBox="0 0 100 124">
    <ellipse cx="50" cy="94" rx="18" ry="6.500" fill="#8794a1"/><ellipse cx="50" cy="92.500" rx="17.500" ry="6" fill="#cbd7e2"/><path d="M48 50h5v43h-5z" fill="#b4bfca"/><path d="M49 50h2v43h-2z" fill="#e4ebf2"/>
    <path d="M20 18H80L86 47H14Z" fill="#4ba0ee"/><path d="M14 47H86V51H14Z" fill="#2670b5"/><path d="M27 23H73L75 44H26Z" fill="#fff"/><text x="31" y="28" font-size="5" font-weight="700" fill="#333">KEYNOTE</text><ellipse cx="40" cy="36" rx="9" ry="6.500" fill="#47a5ec"/><path d="M40 36V29.500Q48 30 49 36Z" fill="#b05fd0"/><path d="M40 36H49Q48 42 42 42.500Z" fill="#ee5b4d"/><path d="M40 36L42 42.500Q35 43 32 39Z" fill="#8cd44e"/><path d="M54 33H66M54 37H66M54 41H64" stroke="#bbb" stroke-width="1.500"/></svg></a>
  <a href="#" aria-label="iTunes" class="flex flex-1 justify-center"><svg class="h-[124px] w-[100px]" viewBox="0 0 100 124">
    <circle cx="50" cy="58" r="41" fill="url(#tunes)"/><circle cx="50" cy="58" r="37" fill="url(#white)"/><path d="M40 38L68 32V68C68 80 54 81 54 73C54 66 61 65 65 66V44L43 49V73C43 85 28 86 28 77C28 70 35 69 40 70Z" fill="url(#note)"/></svg></a>
  <a href="#" aria-label="Books" class="flex flex-1 justify-center"><svg class="h-[124px] w-[100px]" viewBox="0 0 100 124">
    <circle cx="50" cy="58" r="40" fill="url(#rim)"/><circle cx="50" cy="58" r="37" fill="url(#orange)"/><path d="M25 42Q38 35 49 42V78Q46 69 36 71Q30 72 25 75Z" fill="#f7f5f2"/><path d="M75 42Q62 35 51 42V78Q54 69 64 71Q70 72 75 75Z" fill="#ece8e4"/></svg></a>
  <a href="#" aria-label="App Store" class="flex flex-1 justify-center"><svg class="h-[124px] w-[100px]" viewBox="0 0 100 124">
    <circle cx="50" cy="58" r="40" fill="url(#rim)"/><circle cx="50" cy="58" r="37" fill="url(#blue)"/><g stroke="#fff" stroke-width="6.500" stroke-linecap="round"><path d="M55 34L38 62M33 72L31 75M46 34L69 75M26 64H58M70 64H74"/></g>
    <circle cx="81" cy="29" r="17" fill="#ea5240"/><text x="81" y="35.500" text-anchor="middle" font-size="18" fill="#fff">7</text></svg></a>
  <a href="#" aria-label="System Preferences" class="flex flex-1 justify-center"><svg class="h-[124px] w-[100px]" viewBox="0 0 100 124">
    <rect x="10" y="21" width="80" height="75" rx="3" fill="url(#silver)"/><circle cx="50" cy="58" r="32.500" fill="#222"/><circle cx="50" cy="58" r="26" fill="none" stroke="#c4c4c4" stroke-width="5" stroke-dasharray="2.800 2.640"/><circle cx="50" cy="58" r="22" fill="#3d3d3d" stroke="#c0c0c0" stroke-width="4"/><path d="M50 58L40 39M50 58H72M50 58L40 77" stroke="#c6c6c6" stroke-width="5"/><circle cx="50" cy="58" r="4" fill="#9b9b9b"/></svg></a>
  <div class="flex w-[45px] items-center justify-center pb-[8px]"><i class="h-[60px] w-[2px] bg-[#9a6f3b]"></i></div>
  <a href="#" aria-label="Terminal" class="flex flex-1 justify-center"><svg class="h-[124px] w-[100px]" viewBox="0 0 100 124">
    <rect x="11" y="23" width="79" height="69" rx="3" fill="#000" stroke="#b8b8b8" stroke-width="1"/><rect x="16" y="28" width="69" height="59" fill="#262626"/><path d="M21 35L31 40L21 44M33 47H44" fill="none" stroke="#fff" stroke-width="2.500"/><circle cx="50" cy="116" r="4" fill="#5a2f06"/></svg></a>
  <a href="#" aria-label="Chrome" class="flex flex-1 justify-center"><svg class="h-[124px] w-[100px]" viewBox="0 0 100 124">
    <circle cx="50" cy="58" r="41.500" fill="#f9cf5b"/><path d="M50 58V39H87A41.500 41.500 0 0 0 15 36L33 68Z" fill="#d05040"/><path d="M15 36A41.500 41.500 0 0 0 49 99.500L66 68L50 58L33 68Z" fill="#4aa163"/><circle cx="50" cy="58" r="19" fill="#fff"/><circle cx="50" cy="58" r="15" fill="#548cf0"/><circle cx="50" cy="116" r="4" fill="#5a2f06"/></svg></a>
  <a href="#" aria-label="Telegram" class="flex flex-1 justify-center"><svg class="h-[124px] w-[100px]" viewBox="0 0 100 124">
    <circle cx="50" cy="57" r="41.500" fill="url(#tg)"/><path d="M70 39L84 52L80 85L64 79L41 78Z" fill="#2d6c9f" opacity=".35"/><path d="M23 58L70 39L63 80L47 69L40 78L38 66Z" fill="#eef4f9"/><path d="M38 66L64 45L43 69L40 78Z" fill="#c4d4e1"/></svg></a>
  <div class="flex w-[45px] items-center justify-center pb-[8px]"><i class="h-[92px] w-[2px] bg-[#9a6f3b]"></i></div>
  <a href="#" aria-label="Documents" class="flex flex-1 justify-center"><svg class="h-[124px] w-[100px]" viewBox="0 0 100 124">
    <path d="M20 22H60L86 54V88H20Z" fill="#e9e7e2" stroke="#bfb8a8"/><path d="M16 28H60L84 54V89H16Z" fill="#f6f5f2" stroke="#bfb8a8"/><path d="M13 33H66L87 54V90H13Z" fill="#fff" stroke="#c8a76a" stroke-width="1.500"/><path d="M60 22Q70 34 67 48Q78 48 87 56Q80 34 60 22Z" fill="#d9d9d9"/>
    <text x="17" y="42" font-size="7" font-weight="700" fill="#2a7fc0">SCRUM<tspan fill="#6bb83c">study</tspan></text><path d="M36 56H64M30 60H70M26 69H74" stroke="#aaa" stroke-width="1.200"/><path d="M34 64H66" stroke="#3b8dcb" stroke-width="2.500"/><path d="M20 74H40M60 74H80M18 87H82" stroke="#ccc"/><text x="50" y="86" text-anchor="middle" font-size="13" fill="#555">PDF</text></svg></a>
  <a href="#" aria-label="Minimised window" class="flex flex-1 justify-center"><svg class="h-[124px] w-[100px]" viewBox="0 0 100 124">
    <rect x="7" y="34" width="86" height="48" fill="#0c0c14"/><rect x="7" y="34" width="86" height="2" fill="#d8d8d8"/><rect x="22" y="36" width="37" height="14" fill="#5a1d4d"/><path d="M30 38h8v9h-8zM44 40h10v5H44z" fill="#b04a94"/><rect x="22" y="50" width="37" height="12" fill="#e6e6e6"/><rect x="24" y="51" width="15" height="5" fill="#222"/><rect x="22" y="62" width="36" height="20" fill="#27343a"/><rect x="32" y="70" width="3" height="7" fill="#d8c98b"/><rect x="59" y="36" width="18" height="46" fill="#f4f4f4"/><rect x="60" y="37" width="17" height="24" fill="#4a88c4"/><path d="M60 50L68 43L77 50V58H60Z" fill="#c9b38c"/><path d="M60 57h17v4H60z" fill="#4a7a35"/><rect x="60" y="63" width="17" height="4" fill="#e8733a"/><rect x="61" y="69" width="15" height="8" fill="#5b2330"/><path d="M13 38h5v6h-5z" fill="#e03a2e"/><path d="M11 56L18 50L19 62L12 64Z" fill="#3b55a6"/><rect x="81" y="49" width="9" height="14" rx="2" fill="#3a2024"/><path d="M82 38h6v6h-6z" fill="#5b88b5"/>
    <use href="#compass" x="62" y="70" width="30" height="30"/></svg></a>
  <a href="#" aria-label="Trash" class="flex flex-1 justify-center"><svg class="h-[124px] w-[100px]" viewBox="0 0 100 124">
    <path d="M18 28L26 18L38 14L48 18L56 14L66 20L76 18L82 28L70 34H30Z" fill="#e8e8e8"/><path d="M24 24L32 20L34 30ZM68 22L76 24L72 31Z" fill="#555"/><path d="M34 30L44 22L48 32Z" fill="#3fae8c"/><path d="M40 22L52 26L46 34Z" fill="#333"/><path d="M54 20L64 26L60 33L52 32Z" fill="#35528e"/><path d="M52 28L58 26L56 33Z" fill="#c9562d"/>
    <path d="M17 25Q18 32 50 33T82 25L75 93Q72 99 50 99T26 93Z" fill="url(#bin)"/><ellipse cx="50" cy="26" rx="32.500" ry="7" fill="none" stroke="#f2f2f2" stroke-width="1.500" opacity=".7"/><path d="M28 38L36 52L32 70M60 40Q52 60 66 84M44 44Q54 50 62 42" fill="none" stroke="#fff" stroke-width="3" opacity=".5"/></svg></a>
</footer>
</body>
</html>
